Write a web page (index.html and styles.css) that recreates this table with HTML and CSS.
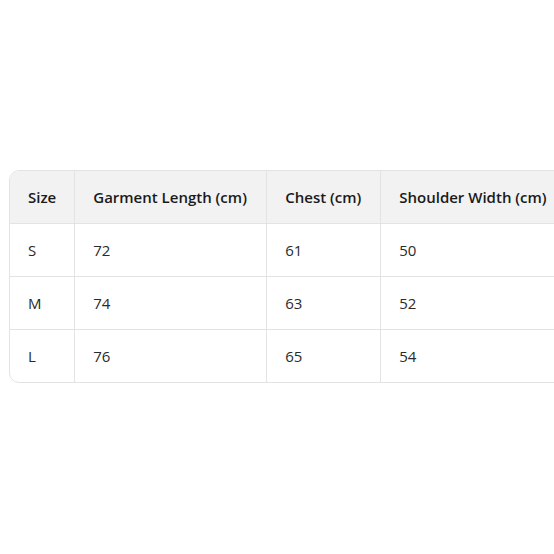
FILE: index.html
```html
<!DOCTYPE html>
<html lang="en">
<head>
<meta charset="utf-8">
<title>Size Chart</title>
<link rel="stylesheet" href="styles.css">
</head>
<body>
<main class="page">
  <div class="table-wrap">
    <table class="size-table">
      <thead>
        <tr>
          <th class="col-size">Size</th>
          <th class="col-length">Garment Length (cm)</th>
          <th class="col-chest">Chest (cm)</th>
          <th class="col-shoulder">Shoulder Width (cm)</th>
        </tr>
      </thead>
      <tbody>
        <tr><td>S</td><td>72</td><td>61</td><td>50</td></tr>
        <tr><td>M</td><td>74</td><td>63</td><td>52</td></tr>
        <tr><td>L</td><td>76</td><td>65</td><td>54</td></tr>
      </tbody>
    </table>
  </div>
</main>
</body>
</html>
```

FILE: styles.css
```css
html, body {
  margin: 0;
  padding: 0;
  overflow: hidden;
  background: #ffffff;
}

body {
  font-family: "Open Sans", "Noto Sans", sans-serif;
  color: #1f1f1f;
}

.page {
  min-height: 100vh;
  display: flex;
  align-items: center;
  padding-left: 9px;
  padding-bottom: 1px;
  box-sizing: border-box;
}

.table-wrap {
  flex: none;
}

.size-table {
  border-collapse: separate;
  border-spacing: 0;
  border: 1px solid #e3e3e3;
  border-radius: 10px;
  overflow: hidden;
  font-size: 15px;
  line-height: 20px;
}

.size-table th,
.size-table td {
  padding: 16px 18px;
  text-align: left;
  border-right: 1px solid #e3e3e3;
  border-bottom: 1px solid #e3e3e3;
  white-space: nowrap;
}

.size-table tbody tr:last-child td {
  border-bottom: none;
}

.size-table th {
  background: #f2f2f2;
  font-weight: 600;
  color: #1a1a1a;
}

.size-table td {
  font-weight: 400;
  color: #2a2a2a;
}

.col-size { width: 28px; }
.col-length { width: 155px; }
.col-chest { width: 77px; }
.col-shoulder { width: 170px; }
```
